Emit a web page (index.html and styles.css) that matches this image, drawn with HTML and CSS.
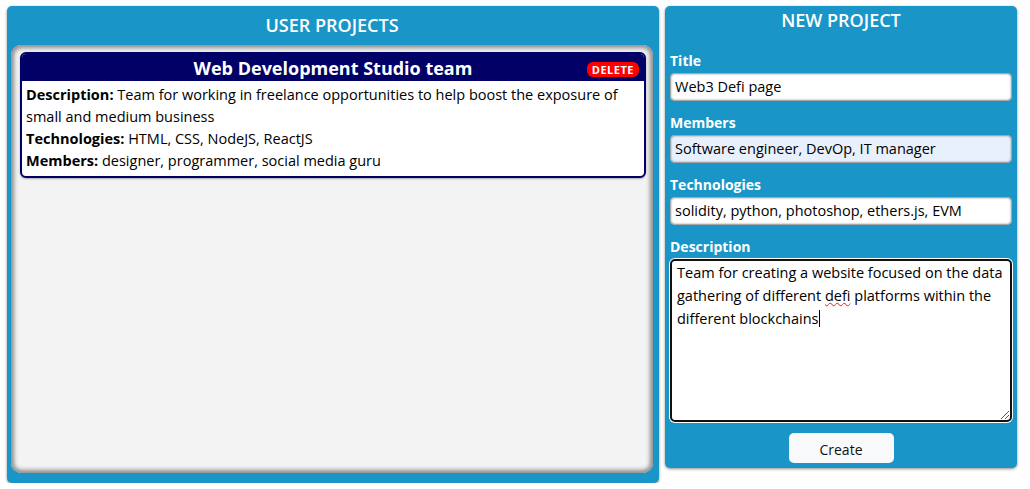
FILE: index.html
```html
<!DOCTYPE html>
<html lang="en">
<head>
<meta charset="utf-8">
<title>Projects</title>
<link rel="stylesheet" href="styles.css">
</head>
<body>
<main class="layout">
  <section class="panel projects">
    <h2 class="panel-title">USER PROJECTS</h2>
    <div class="projects-list">
      <article class="card">
        <header class="card-head">
          <h3 class="card-title">Web Development Studio team</h3>
          <button class="delete">DELETE</button>
        </header>
        <div class="card-body">
          <p><b>Description:</b> Team for working in freelance opportunities to help boost the exposure of small and medium business</p>
          <p><b>Technologies:</b> HTML, CSS, NodeJS, ReactJS</p>
          <p><b>Members:</b> designer, programmer, social media guru</p>
        </div>
      </article>
    </div>
  </section>
  <section class="panel new-project">
    <h2 class="panel-title">NEW PROJECT</h2>
    <form class="form">
      <label class="label">Title</label>
      <div class="input">Web3 Defi page</div>
      <label class="label">Members</label>
      <div class="input autofill">Software engineer, DevOp, IT manager</div>
      <label class="label">Technologies</label>
      <div class="input">solidity, python, photoshop, ethers.js, EVM</div>
      <label class="label">Description</label>
      <div class="textarea">Team for creating a website focused on the data gathering of different <span class="spell">defi</span> platforms within the different blockchains<span class="caret"></span><span class="grip"></span></div>
      <div class="actions"><button type="button" class="create">Create</button></div>
    </form>
  </section>
</main>
</body>
</html>
```
FILE: styles.css
```css
* { box-sizing: border-box; }
html, body { margin: 0; background: #ffffff; }
body {
  font-family: "Open Sans", "Noto Sans", sans-serif;
  font-variant-ligatures: none;
  color: #000;
}
.layout {
  display: flex;
  align-items: flex-start;
  gap: 6px;
  padding: 6px 0 0 7px;
}
.panel {
  background: #1996c7;
  border-radius: 5px;
  box-shadow: 0 1px 3px rgba(0,0,0,0.45);
}
.projects {
  width: 652px;
  height: 477px;
  display: flex;
  flex-direction: column;
  padding: 0 6px 10px 4px;
}
.new-project {
  width: 352px;
  height: 462px;
  padding: 0 5px 0 5px;
}
.panel-title {
  margin: 0;
  color: #fff;
  font-weight: 600;
  font-size: 18px;
  text-align: center;
  line-height: 28px;
}
.projects .panel-title { padding: 5px 0 6px; }
.new-project .panel-title { padding: 0 0 18px; }
.projects-list {
  flex: 1;
  background: #f3f3f3;
  border-radius: 10px;
  box-shadow: inset 0 0 4px 3px #8c8c8c;
  padding: 7px 7px 0 9px;
}
.card {
  border: 2px solid #000066;
  border-radius: 6px;
  background: #fff;
  overflow: hidden;
  box-shadow: 0 1px 2px rgba(0,0,0,0.3);
}
.card-head {
  background: #000066;
  display: flex;
  align-items: center;
  justify-content: center;
  position: relative;
  height: 27px;
}
.card-title {
  margin: 0;
  color: #fff;
  font-size: 18px;
  font-weight: 700;
}
.delete {
  position: absolute;
  right: 5px;
  top: 8px;
  background: #ff0000;
  color: #fff;
  border: 0;
  border-radius: 6px;
  font-family: inherit;
  font-weight: 700;
  font-size: 11px;
  letter-spacing: 0.5px;
  padding: 1px 5px;
  line-height: 13px;
}
.card-body { padding: 3px 4px 4px; font-size: 14.5px; line-height: 22px; }
.card-body p { margin: 0; }
.form { display: flex; flex-direction: column; }
.label {
  color: #fff;
  font-weight: 700;
  font-size: 14px;
  line-height: 17px;
  margin-bottom: 4px;
}
.input {
  height: 28px;
  background: #fff;
  border-radius: 5px;
  box-shadow: inset 0 0 2px 1px #8a8a8a;
  font-size: 14.5px;
  line-height: 28px;
  padding: 0 5px;
  margin-bottom: 13px;
}
.input.autofill { background: #e8f0fe; }
.textarea {
  position: relative;
  height: 163px;
  background: #fff;
  border: 2px solid #111;
  border-radius: 5px;
  box-shadow: 0 0 0 1px #fff;
  font-size: 14.5px;
  line-height: 23px;
  padding: 0 5px;
}
.spell { text-decoration: underline wavy #e0201a; text-decoration-thickness: 1px; }
.caret { display: inline-block; width: 1px; height: 17px; background: #000; vertical-align: -3px; }
.grip {
  position: absolute;
  right: 1px;
  bottom: 1px;
  width: 8px;
  height: 8px;
  background: linear-gradient(135deg, transparent 45%, #555 45%, #555 55%, transparent 55%, transparent 70%, #555 70%, #555 80%, transparent 80%);
}
.actions { display: flex; justify-content: center; padding-top: 11px; }
.create {
  width: 105px;
  height: 30px;
  background: #f8f9fa;
  border: 0;
  border-radius: 5px;
  font-family: inherit;
  font-size: 14px;
  padding-top: 4px;
  color: #111;
}
```
